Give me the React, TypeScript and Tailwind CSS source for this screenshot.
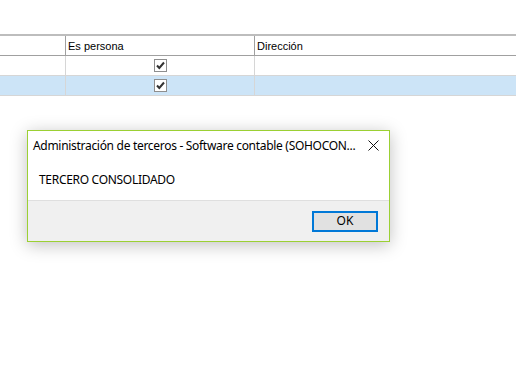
const Check = () => (
  <span className="flex h-[13px] w-[13px] items-center justify-center border border-[#8e8e8e] bg-white">
    <svg width="9" height="9" viewBox="0 0 9 9">
      <path d="M1 4.5 L3.3 7 L8 1.5" fill="none" stroke="#333" strokeWidth="2" />
    </svg>
  </span>
);

const rows = [{ selected: false }, { selected: true }];

export default function App() {
  return (
    <div className="relative h-[372px] w-[516px] overflow-hidden bg-white font-['Liberation_Sans',sans-serif] text-[11px] text-black">
      <div className="pt-[34px]">
        <div className="border-t-2 border-[#bdbdbd]">
          <div className="flex h-[20px] border-b border-[#a0a0a0]">
            <div className="w-[66px] shrink-0 border-r border-[#a0a0a0]" />
            <div className="flex w-[189px] shrink-0 items-center border-r border-[#a0a0a0] pl-[2px] pt-[1px]">
              Es persona
            </div>
            <div className="flex flex-1 items-center pl-[2px] pt-[1px]">Dirección</div>
          </div>
          {rows.map((r, i) => (
            <div
              key={i}
              className={`flex h-[20px] border-b border-[#d6d6d6] ${r.selected ? "bg-[#cce4f7]" : "bg-white"}`}
            >
              <div className="w-[66px] shrink-0 border-r border-[#d6d6d6]" />
              <div className="flex w-[189px] shrink-0 items-center justify-center border-r border-[#d6d6d6]">
                <Check />
              </div>
              <div className="flex-1" />
            </div>
          ))}
        </div>
      </div>

      <div className="absolute left-[27px] top-[130px] flex h-[112px] w-[363px] flex-col border border-[#9bd033] bg-white font-['Noto_Sans',sans-serif] text-[12px] shadow-[0_3px_16px_rgba(0,0,0,0.25)]">
        <div className="flex h-[28px] items-center justify-between pl-[5px] pr-[10px] pt-[1px]">
          <span className="tracking-[-0.3px]">Administración de terceros - Software contable (SOHOCON...</span>
          <svg width="11" height="11" viewBox="0 0 11 11">
            <path d="M0.5 0.5 L10.5 10.5 M10.5 0.5 L0.5 10.5" stroke="#111" strokeWidth="1" />
          </svg>
        </div>
        <div className="flex flex-1 items-start pl-[11px] pt-[12px] tracking-[-0.3px]">TERCERO CONSOLIDADO</div>
        <div className="flex h-[41px] items-center justify-end border-t border-[#dfdfdf] bg-[#f0f0f0] pr-[11px]">
          <button className="flex h-[21px] w-[66px] items-center justify-center border-2 border-[#0078d7] bg-[#e1e1e1] text-[12px]">
            OK
          </button>
        </div>
      </div>
    </div>
  );
}
